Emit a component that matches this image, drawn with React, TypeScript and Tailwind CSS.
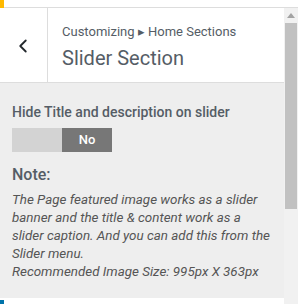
import { ChevronLeft } from 'lucide-react';

export default function App() {
  return (
    <div className="flex h-[304px] w-[298px] flex-col overflow-hidden bg-white font-['Roboto',sans-serif] text-[#555d66]">
      <div className="flex h-[8px] shrink-0 border-b border-[#dddddd]">
        <div className="h-[8px] w-[4px] bg-[#ffb900]" />
      </div>
      <div className="flex flex-1">
        <div className="flex flex-1 flex-col">
          <div className="flex h-[75px] shrink-0 border-b border-[#dddddd] bg-white">
            <div className="flex w-[48px] items-center justify-center border-r border-[#dddddd] text-[#23282d]">
              <ChevronLeft size={22} strokeWidth={2} className="-ml-[2px] mt-[2px]" />
            </div>
            <div className="flex flex-col pl-[14px] pt-[15px]">
              <span className="text-[13px] leading-[18px]">Customizing ▸ Home Sections</span>
              <span className="mt-[5px] text-[20px] leading-[24px]">Slider Section</span>
            </div>
          </div>
          <div className="flex h-[215px] flex-col bg-[#eeeeee] px-[12px] pt-[20px]">
            <span className="text-[14px] font-medium leading-[18px]">Hide Title and description on slider</span>
            <div className="mt-[7px] flex h-[24px] w-[100px]">
              <div className="w-[50px] bg-[#d3d3d3]" />
              <div className="flex w-[50px] items-center justify-center bg-[#777777] text-[13px] font-medium text-white">No</div>
            </div>
            <span className="mt-[13px] text-[16px] font-medium leading-[20px]">Note:</span>
            <p className="mt-[6px] text-[13.4px] italic leading-[18px] text-[#555555]">
              The Page featured image works as a slider banner and the title &amp; content work as a slider caption. And you can add this from the Slider menu.
              <br />
              Recommended Image Size: 995px X 363px
            </p>
          </div>
          <div className="flex flex-1 items-end">
            <div className="h-[4px] w-[4px] bg-[#0073aa]" />
          </div>
        </div>
        <div className="flex w-[14px] flex-col bg-[#f1f1f1]">
          <div className="flex h-[15px] items-center justify-center">
            <svg width="8" height="5" viewBox="0 0 8 5">
              <path d="M0 5 L4 0 L8 5 Z" fill="#a3a3a3" />
            </svg>
          </div>
          <div className="mx-[1px] h-[186px] bg-[#c1c1c1]" />
        </div>
      </div>
    </div>
  );
}
